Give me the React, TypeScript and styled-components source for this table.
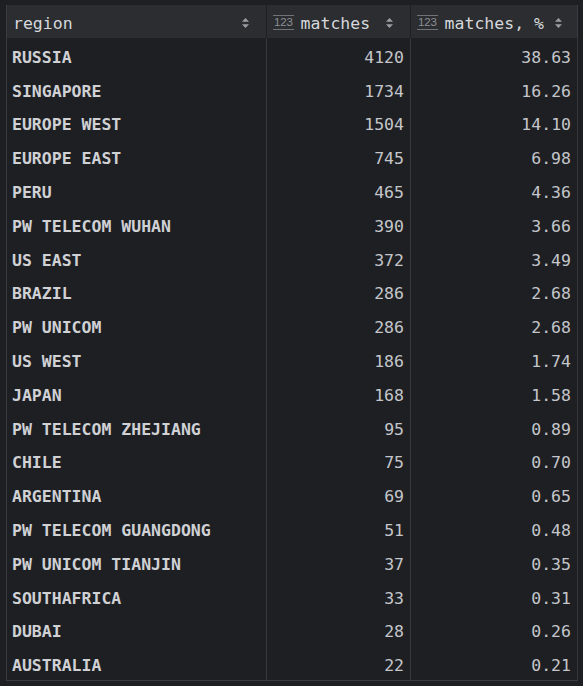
import React from "react";
import styled, { createGlobalStyle } from "styled-components";

type Row = { region: string; matches: number; share: string };

const rows: Row[] = [
  { region: "RUSSIA", matches: 4120, share: "38.63" },
  { region: "SINGAPORE", matches: 1734, share: "16.26" },
  { region: "EUROPE WEST", matches: 1504, share: "14.10" },
  { region: "EUROPE EAST", matches: 745, share: "6.98" },
  { region: "PERU", matches: 465, share: "4.36" },
  { region: "PW TELECOM WUHAN", matches: 390, share: "3.66" },
  { region: "US EAST", matches: 372, share: "3.49" },
  { region: "BRAZIL", matches: 286, share: "2.68" },
  { region: "PW UNICOM", matches: 286, share: "2.68" },
  { region: "US WEST", matches: 186, share: "1.74" },
  { region: "JAPAN", matches: 168, share: "1.58" },
  { region: "PW TELECOM ZHEJIANG", matches: 95, share: "0.89" },
  { region: "CHILE", matches: 75, share: "0.70" },
  { region: "ARGENTINA", matches: 69, share: "0.65" },
  { region: "PW TELECOM GUANGDONG", matches: 51, share: "0.48" },
  { region: "PW UNICOM TIANJIN", matches: 37, share: "0.35" },
  { region: "SOUTHAFRICA", matches: 33, share: "0.31" },
  { region: "DUBAI", matches: 28, share: "0.26" },
  { region: "AUSTRALIA", matches: 22, share: "0.21" },
];

const GlobalStyle = createGlobalStyle`
  body {
    margin: 0;
    background: #1e1f22;
    font-family: "DejaVu Sans Mono", "Liberation Mono", monospace;
  }
`;

const SortIcon = () => (
  <svg width="9" height="12" viewBox="0 0 9 12">
    <path d="M4.5 1 L8 4.8 H1 Z" fill="#9a9da3" />
    <path d="M4.5 11 L8 7.2 H1 Z" fill="#9a9da3" />
  </svg>
);

export default function App() {
  return (
    <>
      <GlobalStyle />
      <Page>
        <Table>
          <HeaderCell>
            <HeaderLabel>region</HeaderLabel>
            <SortIcon />
          </HeaderCell>
          <HeaderCell>
            <NumIcon>123</NumIcon>
            <HeaderLabel>matches</HeaderLabel>
            <SortIcon />
          </HeaderCell>
          <HeaderCell>
            <NumIcon>123</NumIcon>
            <HeaderLabel>matches, %</HeaderLabel>
            <SortIcon />
          </HeaderCell>
          {rows.map((r) => (
            <React.Fragment key={r.region}>
              <Cell $bold>{r.region}</Cell>
              <Cell $right>{r.matches}</Cell>
              <Cell $right>{r.share}</Cell>
            </React.Fragment>
          ))}
        </Table>
      </Page>
    </>
  );
}

const Page = styled.div`
  padding: 5px 0 0 6px;
`;

const Table = styled.div`
  display: grid;
  grid-template-columns: 260px 144px 167px;
  grid-template-rows: 33px repeat(19, 33.8px);
  width: 571px;
  border-left: 1px solid #393b40;
  border-bottom: 1px solid #393b40;
`;

const HeaderCell = styled.div`
  display: flex;
  align-items: center;
  gap: 7px;
  padding: 4px 16px 0 6px;
  background: #2b2d30;
  border-right: 1px solid #1e1f22;
  color: #d6d8dc;
  font-size: 16.5px;

  &:nth-child(3) {
    border-right-color: #393b40;
    padding-right: 14px;
  }

  & > svg {
    margin-left: auto;
    margin-top: -2px;
    flex-shrink: 0;
  }
`;

const HeaderLabel = styled.span`
  white-space: pre;
`;

const NumIcon = styled.span`
  display: inline-flex;
  align-items: center;
  height: 13px;
  margin-top: -2px;
  padding: 0 1px;
  border-top: 1px solid #6f737a;
  border-bottom: 1px solid #6f737a;
  color: #8c8f96;
  font-family: "Liberation Sans", sans-serif;
  font-size: 11.5px;
  letter-spacing: -0.2px;
  line-height: 1;
`;

const Cell = styled.div<{ $bold?: boolean; $right?: boolean }>`
  display: flex;
  align-items: center;
  justify-content: ${({ $right }) => ($right ? "flex-end" : "flex-start")};
  padding: 5px 6px 0 5px;
  border-right: 1px solid #35373b;
  color: ${({ $bold }) => ($bold ? "#cfd1d5" : "#c4c6cb")};
  font-size: 16.5px;
  font-weight: ${({ $bold }) => ($bold ? 700 : 400)};
  white-space: pre;
`;
